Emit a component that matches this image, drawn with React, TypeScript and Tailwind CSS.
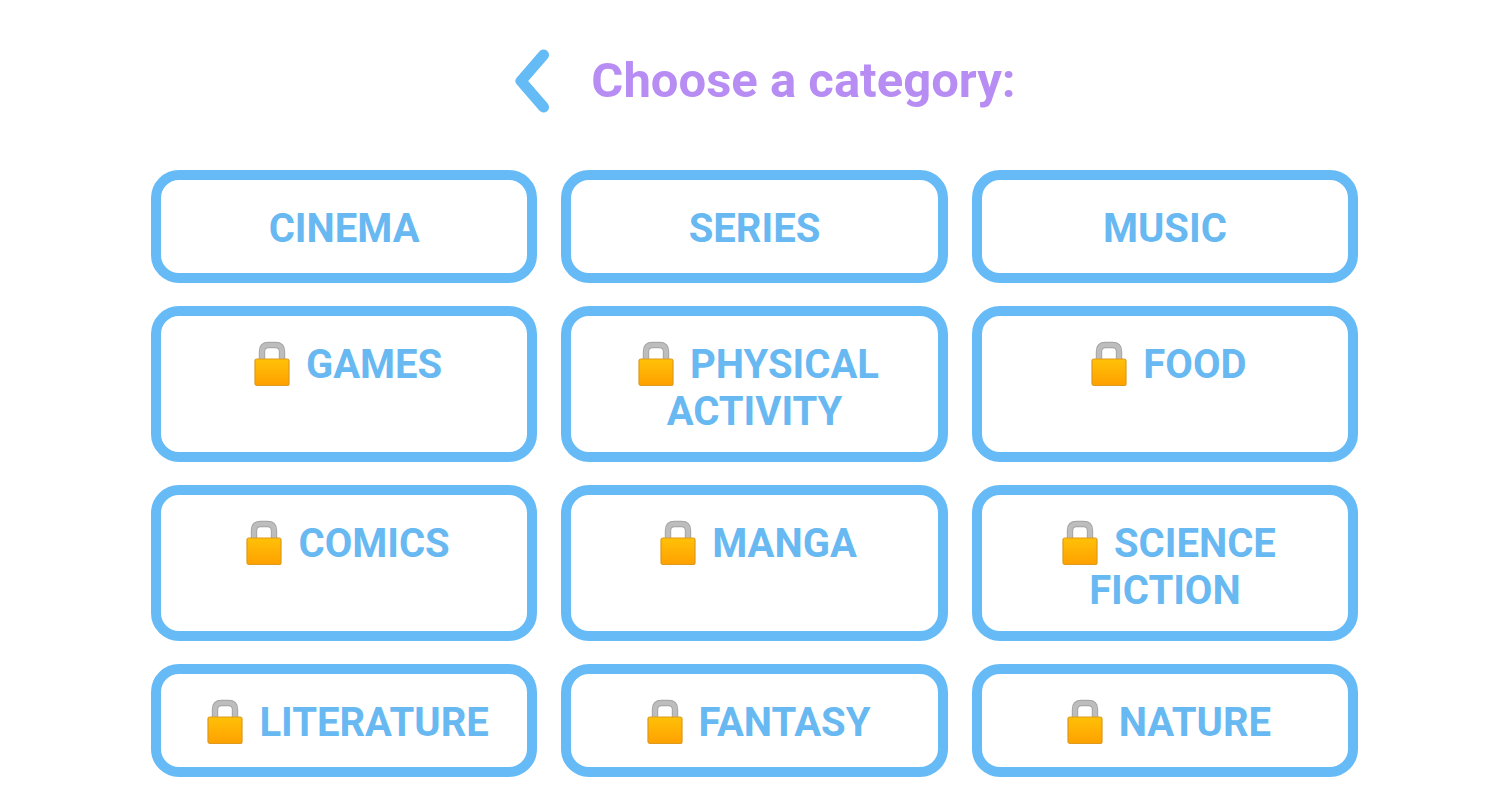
import React from "react";

type Category = { name: string; locked: boolean };

const categories: Category[] = [
  { name: "CINEMA", locked: false },
  { name: "SERIES", locked: false },
  { name: "MUSIC", locked: false },
  { name: "GAMES", locked: true },
  { name: "PHYSICAL ACTIVITY", locked: true },
  { name: "FOOD", locked: true },
  { name: "COMICS", locked: true },
  { name: "MANGA", locked: true },
  { name: "SCIENCE FICTION", locked: true },
  { name: "LITERATURE", locked: true },
  { name: "FANTASY", locked: true },
  { name: "NATURE", locked: true },
];

function Lock() {
  return (
    <svg viewBox="0 0 36 46" className="-mt-3 mr-4 -mb-1.5 ml-2 inline-block h-[46px] w-9 align-middle" role="img" aria-label="Locked">
      <defs>
        <linearGradient id="lock-body" x1="0" y1="0" x2="0" y2="1">
          <stop offset="0" stopColor="#ffc107" />
          <stop offset="1" stopColor="#ffa000" />
        </linearGradient>
      </defs>
      <path d="M8 19V10.5q0-6.5 6.5-6.5h7q6.5 0 6.5 6.5V19" fill="none" stroke="#a3a3a3" strokeWidth="6.4" />
      <path d="M8 19V10.5q0-6.5 6.5-6.5h7q6.5 0 6.5 6.5V19" fill="none" stroke="#bdbdbd" strokeWidth="4.6" />
      <rect x="1" y="18" width="34" height="26.5" rx="2" fill="url(#lock-body)" stroke="#dd9a1c" strokeWidth="1.2" />
    </svg>
  );
}

export default function App() {
  return (
    <main className="min-h-screen bg-white px-[10%] pt-12 pb-6 font-['Roboto',sans-serif] font-bold">
      <header className="flex items-center justify-center gap-10 pl-5">
        <button type="button" aria-label="Back" className="text-[#64bbf6]">
          <svg viewBox="0 0 38 64" className="h-16 w-[38px]" fill="none" stroke="currentColor" strokeWidth="11" strokeLinecap="round" strokeLinejoin="round">
            <path d="M30.5 6 8 32l22.5 26" />
          </svg>
        </button>
        <h1 className="text-[49px] leading-[66px] text-[#b78df3]">Choose a category:</h1>
      </header>
      <div className="mt-14 grid grid-cols-3 gap-x-6 gap-y-[23px]">
        {categories.map((c) => (
          <button
            key={c.name}
            type="button"
            className="flex min-h-[113px] items-start justify-center rounded-[28px] border-10 border-[#66bbf7] px-8 pt-[25px] pb-[17px] text-[40px] leading-[47px] text-[#68b8f1]"
          >
            <span>
              {c.locked && <Lock />}
              {c.name}
            </span>
          </button>
        ))}
      </div>
    </main>
  );
}
